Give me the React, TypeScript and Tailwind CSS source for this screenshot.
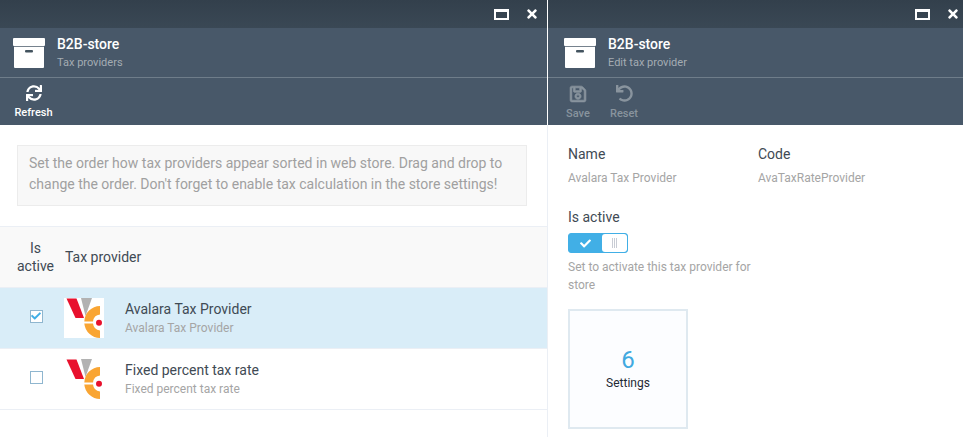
import React from "react";
import { FaSync, FaRegSave, FaUndo, FaCheck, FaTimes } from "react-icons/fa";

function BoxIcon() {
  return (
    <svg width="32" height="30" viewBox="0 0 32 30" className="shrink-0">
      <rect x="0" y="0" width="32" height="8" rx="1" fill="#fff" />
      <path d="M1 8.7h30V29a1 1 0 0 1-1 1H2a1 1 0 0 1-1-1z" fill="#fff" />
      <rect x="12" y="12" width="8" height="2.5" rx="1" fill="#43535f" />
    </svg>
  );
}

function Logo() {
  return (
    <svg width="40" height="40" viewBox="0 0 40 40">
      <polygon points="17,0 28,0 21.5,18" fill="#b2b2b2" />
      <polygon points="2.5,0.5 12.5,0.5 20,20 11.5,20" fill="#e8112d" />
      <path d="M36 8 A16 16 0 0 0 20.3 23.5 L29 23.5 A8 8 0 0 1 36 16.5 Z" fill="#f9a533" />
      <path d="M20.3 25.5 A16 16 0 0 0 36 40 L36 32.5 A8 8 0 0 1 29 25.5 Z" fill="#f9a533" />
      <circle cx="35" cy="24.7" r="3" fill="#e8112d" />
    </svg>
  );
}

function BladeTop({ wide }: { wide?: boolean }) {
  return (
    <div className="h-[28px] bg-gradient-to-b from-[#33404c] to-[#3a4855] flex items-center justify-end shrink-0">
      <div className="w-[15px] h-[11px] border-2 border-t-[3px] border-white mr-[16px]" />
      <FaTimes className={wide ? "text-white mr-[3px]" : "text-white mr-[8px]"} size={14} />
    </div>
  );
}

function BladeHead({ sub, inset }: { sub: string; inset?: boolean }) {
  return (
    <div className={`h-[50px] flex items-center gap-[12px] border-b border-[#6f7d8a] shrink-0 ${inset ? "pl-[16px]" : "pl-[13px]"}`}>
      <BoxIcon />
      <div>
        <div className="text-[14px] leading-[17px] font-medium text-white">B2B-store</div>
        <div className="text-[11px] leading-[14px] mt-[3px] text-[#a4acb3]">{sub}</div>
      </div>
    </div>
  );
}

function Row({ checked, title }: { checked?: boolean; title: string }) {
  return (
    <div className={`h-[61px] flex items-center border-b border-[#ebeff5] ${checked ? "bg-[#d9edf8]" : "bg-white"}`}>
      <div className="w-[64px] flex justify-center">
        <div className="w-[13px] h-[13px] border border-[#8fb6cf] bg-white flex items-center justify-center ml-[8px] mb-[4px]">
          {checked && <FaCheck className="text-[#41afe6]" size={10} />}
        </div>
      </div>
      <div className={`w-[40px] h-[40px] shrink-0 ${checked ? "bg-white" : ""}`}>
        <Logo />
      </div>
      <div className="ml-[21px]">
        <div className="text-[14px] leading-[18px] text-[#3f4a54]">{title}</div>
        <div className="text-[12px] leading-[15px] mt-[3px] text-[#a5a5a5]">{title}</div>
      </div>
    </div>
  );
}

export default function App() {
  return (
    <div className="w-[963px] h-[437px] flex overflow-hidden bg-white font-['Roboto',sans-serif]">
      <div className="w-[547px] shrink-0 flex flex-col">
        <div className="bg-[#485869] shrink-0">
          <BladeTop />
          <BladeHead sub="Tax providers" />
          <div className="h-[47px] flex">
            <div className="w-[67px] flex flex-col items-center pt-[7px] text-white">
              <FaSync size={16} />
              <span className="text-[11px] leading-[13px] mt-[5px] font-medium">Refresh</span>
            </div>
          </div>
        </div>
        <div className="pt-[20px] pl-[17px] pr-[20px]">
          <div className="h-[61px] bg-[#f8f8f8] border border-[#ececec] pl-[11px] pr-[8px] pt-[7px] text-[14px] leading-[21px] text-[#a0a0a0]">
            Set the order how tax providers appear sorted in web store. Drag and drop to change the order. Don't forget to enable tax calculation in the store settings!
          </div>
        </div>
        <div className="mt-[20px] h-[62px] bg-[#f9f9f9] border-y border-[#ebeff5] flex items-center text-[14px] text-[#3f4a54] leading-[18px]">
          <div className="w-[65px] pl-[6px] text-center">
            Is
            <br />
            active
          </div>
          <div>Tax provider</div>
        </div>
        <Row checked title="Avalara Tax Provider" />
        <Row title="Fixed percent tax rate" />
      </div>
      <div className="flex-1 flex flex-col border-l border-[#ebeff5]">
        <div className="bg-[#485869] border-l border-white -ml-px shrink-0">
          <BladeTop wide />
          <BladeHead sub="Edit tax provider" inset />
          <div className="h-[47px] flex pl-[17px] text-[#89949e]">
            <div className="w-[26px] flex flex-col items-center pt-[7px]">
              <FaRegSave size={18} stroke="currentColor" strokeWidth={20} />
              <span className="text-[11px] leading-[13px] mt-[4px] font-medium">Save</span>
            </div>
            <div className="w-[30px] ml-[18px] flex flex-col items-center pt-[7px]">
              <FaUndo size={17} />
              <span className="text-[11px] leading-[13px] mt-[5px] font-medium">Reset</span>
            </div>
          </div>
        </div>
        <div className="pl-[20px] pt-[20px]">
          <div className="flex">
            <div className="w-[190px]">
              <div className="text-[14px] leading-[18px] text-[#3f4a54]">Name</div>
              <div className="text-[12px] leading-[15px] mt-[8px] text-[#a5a5a5]">Avalara Tax Provider</div>
            </div>
            <div>
              <div className="text-[14px] leading-[18px] text-[#3f4a54]">Code</div>
              <div className="text-[12px] leading-[15px] mt-[8px] text-[#a5a5a5]">AvaTaxRateProvider</div>
            </div>
          </div>
          <div className="text-[14px] leading-[18px] text-[#3f4a54] mt-[22px]">Is active</div>
          <div className="w-[60px] h-[20px] mt-[7px] rounded-[3px] border border-[#41afe6] bg-[#41afe6] flex overflow-hidden">
            <div className="w-[33px] flex items-center justify-center">
              <FaCheck className="text-white" size={11} />
            </div>
            <div className="flex-1 bg-white rounded-[3px] flex items-center justify-center gap-[1px]">
              <span className="w-px h-[10px] bg-[#c8ccd4]" />
              <span className="w-px h-[10px] bg-[#c8ccd4]" />
              <span className="w-px h-[10px] bg-[#c8ccd4]" />
            </div>
          </div>
          <div className="w-[190px] text-[12px] leading-[18px] mt-[5px] text-[#a5a5a5]">
            Set to activate this tax provider for store
          </div>
          <div className="w-[120px] h-[120px] mt-[15px] border-2 border-[#dfe9f0] bg-[#fcfdff] flex flex-col items-center justify-center">
            <div className="text-[24px] leading-[26px] text-[#41a9e0]">6</div>
            <div className="text-[12px] leading-[16px] mt-[2px] text-[#1f2933]">Settings</div>
          </div>
        </div>
      </div>
    </div>
  );
}
